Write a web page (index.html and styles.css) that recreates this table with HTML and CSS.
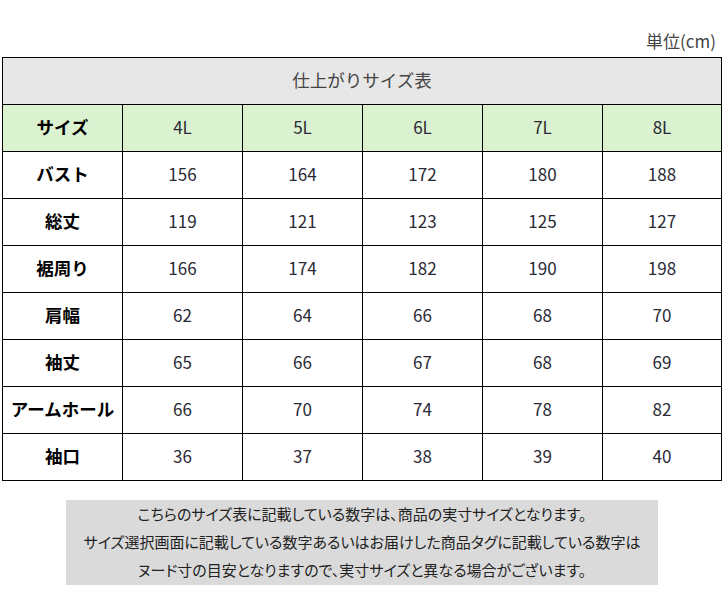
FILE: index.html
```html
<!DOCTYPE html>
<html lang="ja">
<head>
<meta charset="utf-8">
<link rel="stylesheet" href="styles.css">
</head>
<body>
<div class="page">
  <div class="unit">単位(cm)</div>
  <table class="size-table">
    <colgroup>
      <col class="c"><col class="c"><col class="c"><col class="c"><col class="c"><col class="c-last">
    </colgroup>
    <tr class="title-row"><td colspan="6">仕上がりサイズ表</td></tr>
    <tr class="head-row"><th>サイズ</th><td>4L</td><td>5L</td><td>6L</td><td>7L</td><td>8L</td></tr>
    <tr><th>バスト</th><td>156</td><td>164</td><td>172</td><td>180</td><td>188</td></tr>
    <tr><th>総丈</th><td>119</td><td>121</td><td>123</td><td>125</td><td>127</td></tr>
    <tr><th>裾周り</th><td>166</td><td>174</td><td>182</td><td>190</td><td>198</td></tr>
    <tr><th>肩幅</th><td>62</td><td>64</td><td>66</td><td>68</td><td>70</td></tr>
    <tr><th>袖丈</th><td>65</td><td>66</td><td>67</td><td>68</td><td>69</td></tr>
    <tr><th>アームホール</th><td>66</td><td>70</td><td>74</td><td>78</td><td>82</td></tr>
    <tr><th>袖口</th><td>36</td><td>37</td><td>38</td><td>39</td><td>40</td></tr>
  </table>
  <div class="note">
    <p>こちらのサイズ表に記載している数字は、商品の実寸サイズとなります。</p>
    <p>サイズ選択画面に記載している数字あるいはお届けした商品タグに記載している数字は</p>
    <p>ヌード寸の目安となりますので、実寸サイズと異なる場合がございます。</p>
  </div>
</div>
</body>
</html>
```

FILE: styles.css
```css
html, body {
  margin: 0;
  padding: 0;
  background: #fff;
}
body {
  font-family: "Noto Sans CJK JP", "Noto Sans", sans-serif;
  color: #333;
}
.page {
  width: 726px;
}
.unit {
  height: 57px;
  box-sizing: border-box;
  padding: 29px 10px 0 0;
  text-align: right;
  font-size: 17px;
  line-height: 24px;
  color: #444;
}
.size-table {
  margin-left: 2px;
  width: 719px;
  table-layout: fixed;
  border-collapse: collapse;
}
.size-table .c { width: 120px; }
.size-table .c-last { width: 119px; }
.size-table td,
.size-table th {
  border: 1px solid #000;
  height: 43px;
  padding: 0 0 3px 0;
  text-align: center;
  vertical-align: middle;
  font-size: 17px;
  font-weight: 400;
  color: #2a2a35;
}
.size-table th {
  font-weight: 700;
  color: #000;
  font-size: 17.5px;
}
.title-row td {
  background: #e7e7e7;
  color: #444;
  font-size: 17.5px;
}
.head-row th,
.head-row td {
  background: #daf2d0;
}
.note {
  margin: 19px 0 0 66px;
  width: 592px;
  height: 85px;
  box-sizing: border-box;
  padding-bottom: 4px;
  background: #dadada;
  text-align: center;
  font-size: 15px;
  line-height: 28px;
  color: #222;
  font-feature-settings: "palt";
}
.note p {
  margin: 0;
}
```
